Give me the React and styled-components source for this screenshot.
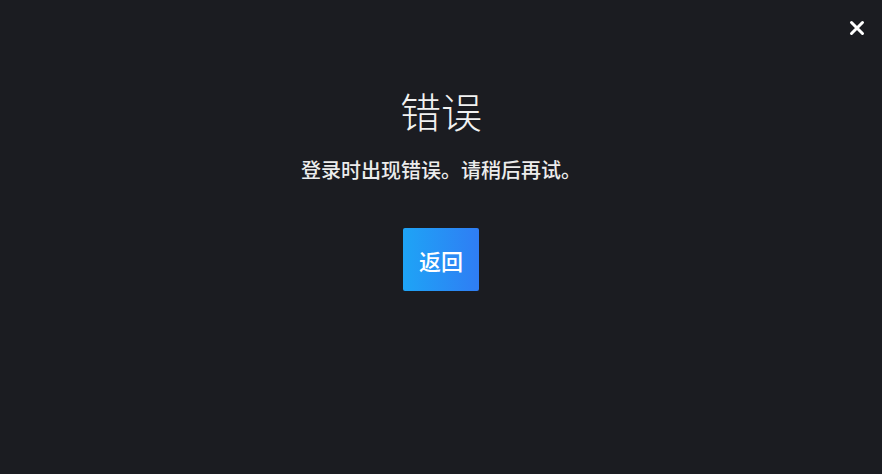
import React from "react";
import styled, { createGlobalStyle } from "styled-components";

const Global = createGlobalStyle`
  html, body {
    margin: 0;
    padding: 0;
    background: #1b1c21;
  }
  body {
    font-family: "Noto Sans CJK SC", "Noto Sans", sans-serif;
  }
`;

const Page = styled.div`
  width: 882px;
  height: 474px;
  background: #1b1c21;
  position: relative;
  display: flex;
  flex-direction: column;
  align-items: center;
  box-sizing: border-box;
  padding-top: 82px;
  overflow: hidden;
`;

const Close = styled.button`
  position: absolute;
  top: 19px;
  right: 16px;
  width: 18px;
  height: 18px;
  padding: 0;
  border: none;
  background: transparent;
  cursor: pointer;
  display: flex;
  align-items: center;
  justify-content: center;
`;

const Title = styled.h1`
  margin: 0;
  color: #f2f2f2;
  font-size: 41px;
  font-weight: 300;
  line-height: 56px;
`;

const Message = styled.p`
  margin: 19px 0 0;
  color: #ececec;
  font-size: 20px;
  font-weight: 500;
  line-height: 26px;
`;

const BackButton = styled.button`
  margin-top: 45px;
  width: 76px;
  height: 63px;
  border: none;
  border-radius: 2px;
  background: linear-gradient(90deg, #1ea4f6 0%, #2f7df4 100%);
  color: #ffffff;
  font-family: inherit;
  font-size: 22px;
  font-weight: 500;
  cursor: pointer;
`;

const App = () => {
  return (
    <>
      <Global />
      <Page>
        <Close aria-label="关闭">
          <svg width="16" height="16" viewBox="0 0 16 16">
            <path
              d="M2.5 2.5 L13.5 13.5 M13.5 2.5 L2.5 13.5"
              stroke="#ffffff"
              strokeWidth="3"
              strokeLinecap="round"
            />
          </svg>
        </Close>
        <Title>错误</Title>
        <Message>登录时出现错误。请稍后再试。</Message>
        <BackButton>返回</BackButton>
      </Page>
    </>
  );
};

export default App;
